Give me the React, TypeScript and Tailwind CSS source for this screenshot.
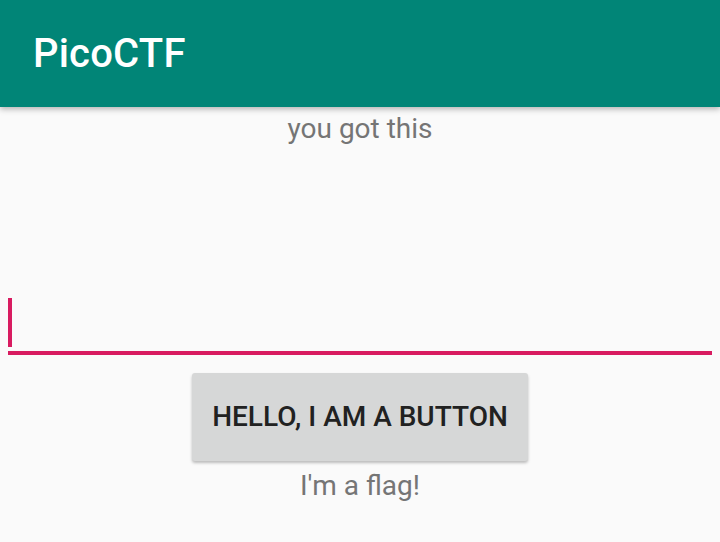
export default function App() {
  return (
    <div
      className="w-[720px] h-[542px] bg-[#fafafa] flex flex-col overflow-hidden"
      style={{ fontFamily: "Roboto, 'Noto Sans', sans-serif" }}
    >
      {/* toolbar */}
      <div className="h-[107px] shrink-0 bg-[#018577] flex items-center pl-[33px] shadow-[0_2px_6px_rgba(0,0,0,0.3)] relative z-10">
        <span className="text-white text-[40px] leading-none font-medium tracking-[0.2px]">PicoCTF</span>
      </div>

      <div className="mt-[5px] text-center text-[28px] leading-[33px] text-[#757575]">you got this</div>

      {/* edit text */}
      <div className="mx-2 mt-[153px]">
        <div className="w-1 h-[49px] bg-[#d81b60]" />
        <div className="mt-1 h-1 bg-[#d81b60]" />
      </div>

      <div className="flex justify-center mt-[18px]">
        <button className="w-[336px] h-[88px] rounded-[3px] bg-[#d6d7d7] text-[#212121] text-[28px] font-medium shadow-[0_2px_3px_rgba(0,0,0,0.25)]">
          HELLO, I AM A BUTTON
        </button>
      </div>

      <div className="mt-[8px] text-center text-[28px] leading-[33px] text-[#757575]">I'm a flag!</div>
    </div>
  );
}
